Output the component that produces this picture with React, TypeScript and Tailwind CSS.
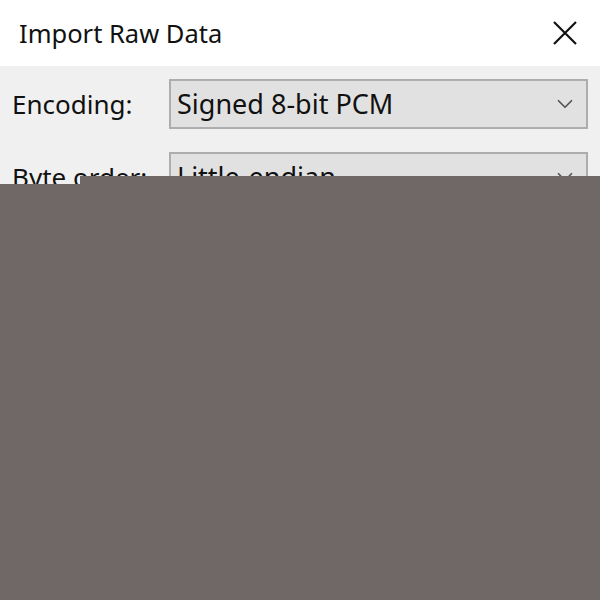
import { ChevronDown } from "lucide-react";

function Combo({ value }: { value: string }) {
  return (
    <div className="flex-1 h-[50px] flex items-center justify-between bg-[#e1e1e1] border-2 border-[#adadad] pl-[6px] pr-[8px]">
      <span className="text-[27px] text-[#111]">{value}</span>
      <ChevronDown className="w-[26px] h-[26px] text-[#555]" strokeWidth={1.6} />
    </div>
  );
}

export default function App() {
  return (
    <div className="relative w-[600px] h-[600px] overflow-hidden bg-[#f0f0f0] font-['Noto_Sans','Open_Sans',sans-serif]">
      <div className="h-[66px] bg-white flex items-center justify-between pl-[19px] pr-[22px]">
        <span className="text-[25.5px] text-[#111]">Import Raw Data</span>
        <svg width="26" height="26" viewBox="0 0 26 26" className="text-[#111]">
          <path d="M2 2 L24 24 M24 2 L2 24" stroke="currentColor" strokeWidth="2.2" />
        </svg>
      </div>

      <div className="flex flex-col gap-[23px] pt-[13px] pl-[12px] pr-[12px]">
        <div className="flex items-center">
          <span className="w-[157px] text-[26px] text-[#111]">Encoding:</span>
          <Combo value="Signed 8-bit PCM" />
        </div>
        <div className="flex items-center">
          <span className="w-[157px] text-[26px] text-[#111]">Byte order:</span>
          <Combo value="Little-endian" />
        </div>
      </div>

      {/* occluding overlay from the reference */}
      <div className="absolute left-0 top-[184px] w-[80px] h-[416px] bg-[#706866]" />
      <div className="absolute left-[80px] top-[176px] w-[520px] h-[424px] bg-[#706866]" />
    </div>
  );
}
